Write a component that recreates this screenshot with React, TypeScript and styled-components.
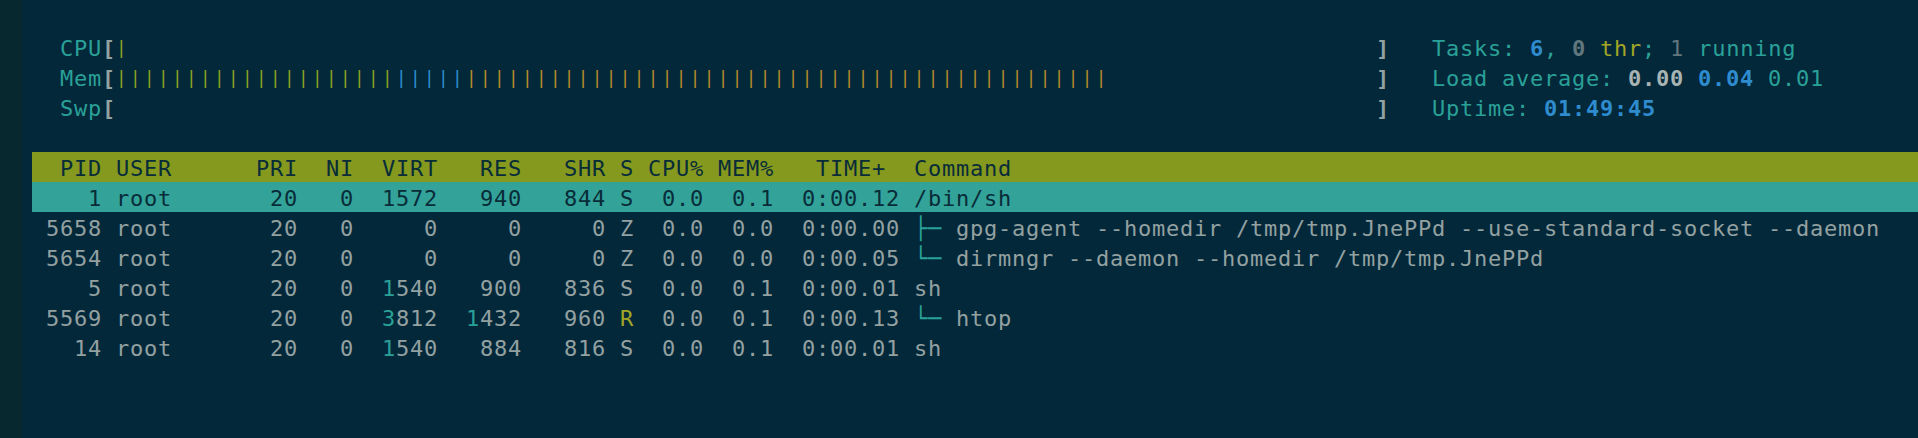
import React from 'react';
import styled, { createGlobalStyle } from 'styled-components';

const CW = 14; // width of one terminal column, px

const C = {
  bg: '#03283a',
  strip: '#08282f',
  text: '#93a1a1',
  cyan: '#2aa198',
  blue: '#2e8ccf',
  green: '#8e9e24',
  yellow: '#b98a2a',
  dim: '#62777d',
  ink: '#082c38',
  header: '#86991f',
  select: '#33a39a',
  thr: '#a2a626',
  light: '#a8b3b3',
};

const GlobalStyle = createGlobalStyle`
  html, body { margin: 0; padding: 0; background: ${C.bg}; }
  body { width: 1918px; height: 438px; overflow: hidden; }
`;

const Screen = styled.div`
  display: flex;
  width: 1918px;
  height: 438px;
  background: ${C.bg};
  font-family: "DejaVu Sans Mono", "Liberation Mono", monospace;
  font-size: 22px;
  letter-spacing: 0.755px;
  color: ${C.text};
`;

const Strip = styled.div`
  flex: none;
  width: 22px;
  background: ${C.strip};
`;

const Terminal = styled.div`
  flex: 1;
  min-width: 0;
  display: flex;
  flex-direction: column;
  padding: 32px 0 0 10px;
`;

const Line = styled.div<{ $bg?: string; $fg?: string }>`
  display: flex;
  flex: none;
  height: 30px;
  line-height: 33px;
  white-space: pre;
  background: ${(p) => p.$bg ?? 'transparent'};
  color: ${(p) => p.$fg ?? 'inherit'};
`;

/* ---------- meters ---------- */

const LeftMeter = styled.div`
  display: flex;
  flex: none;
  width: ${97 * CW}px;
`;

const MeterLabel = styled.span`
  flex: none;
  width: ${5 * CW}px;
  text-align: right;
  color: ${C.cyan};
`;

const Bracket = styled.span`
  flex: none;
  width: ${CW}px;
  color: ${C.text};
  font-weight: bold;
`;

const BarArea = styled.span`
  flex: none;
  display: block;
  width: ${90 * CW}px;
`;

/* the bar glyph is drawn smaller than the text, on a 14px cell */
const Bar = styled.span<{ $c: string }>`
  color: ${(p) => p.$c};
  font-size: 17.6px;
  letter-spacing: ${CW - 17.6 * 0.6021}px;
  vertical-align: 3.5px;
`;

const RightMeter = styled.div`
  flex: none;
  padding-left: ${3 * CW}px;
`;

const T = styled.span<{ $c?: string; $b?: boolean }>`
  color: ${(p) => p.$c ?? C.cyan};
  font-weight: ${(p) => (p.$b ? 'bold' : 'normal')};
`;

type Seg = { n: number; c: string };

const Meter: React.FC<{ label: string; segs: Seg[]; children?: React.ReactNode }> = ({
  label,
  segs,
  children,
}) => (
  <Line>
    <LeftMeter>
      <MeterLabel>{label}</MeterLabel>
      <Bracket>[</Bracket>
      <BarArea>
        {segs.map((s, i) => (
          <Bar key={i} $c={s.c}>
            {'|'.repeat(s.n)}
          </Bar>
        ))}
      </BarArea>
      <Bracket>]</Bracket>
    </LeftMeter>
    <RightMeter>{children}</RightMeter>
  </Line>
);

/* ---------- process table ---------- */

const Cell = styled.span<{ $w: number; $right?: boolean; $pad?: boolean }>`
  flex: none;
  width: ${(p) => p.$w * CW}px;
  text-align: ${(p) => (p.$right ? 'right' : 'left')};
  padding-left: ${(p) => (p.$pad ? CW : 0)}px;
  box-sizing: border-box;
`;

const CmdCell = styled.span`
  flex: 1;
  padding-left: ${CW}px;
`;

const Hi = styled.span<{ $c: string; $on: boolean }>`
  color: ${(p) => (p.$on ? p.$c : 'inherit')};
`;

type Proc = {
  pid: number;
  virt: string;
  res: string;
  shr: string;
  s: string;
  cpu: string;
  mem: string;
  time: string;
  tree?: string;
  cmd: string;
  selected?: boolean;
};

const procs: Proc[] = [
  { pid: 1, virt: '1572', res: '940', shr: '844', s: 'S', cpu: '0.0', mem: '0.1', time: '0:00.12', cmd: '/bin/sh', selected: true },
  { pid: 5658, virt: '0', res: '0', shr: '0', s: 'Z', cpu: '0.0', mem: '0.0', time: '0:00.00', tree: '├─ ', cmd: 'gpg-agent --homedir /tmp/tmp.JnePPd --use-standard-socket --daemon' },
  { pid: 5654, virt: '0', res: '0', shr: '0', s: 'Z', cpu: '0.0', mem: '0.0', time: '0:00.05', tree: '└─ ', cmd: 'dirmngr --daemon --homedir /tmp/tmp.JnePPd' },
  { pid: 5, virt: '1540', res: '900', shr: '836', s: 'S', cpu: '0.0', mem: '0.1', time: '0:00.01', cmd: 'sh' },
  { pid: 5569, virt: '3812', res: '1432', shr: '960', s: 'R', cpu: '0.0', mem: '0.1', time: '0:00.13', tree: '└─ ', cmd: 'htop' },
  { pid: 14, virt: '1540', res: '884', shr: '816', s: 'S', cpu: '0.0', mem: '0.1', time: '0:00.01', cmd: 'sh' },
];

const Mem: React.FC<{ v: string; on: boolean }> = ({ v, on }) =>
  v.length > 3 ? (
    <>
      <Hi $c={C.cyan} $on={on}>
        {v.slice(0, v.length - 3)}
      </Hi>
      {v.slice(v.length - 3)}
    </>
  ) : (
    <>{v}</>
  );

const ProcRow: React.FC<{ p: Proc }> = ({ p }) => {
  const on = !p.selected;
  return (
    <Line $bg={p.selected ? C.select : undefined} $fg={p.selected ? C.ink : undefined}>
      <Cell $w={5} $right>{p.pid}</Cell>
      <Cell $w={10} $pad>root</Cell>
      <Cell $w={4} $right>20</Cell>
      <Cell $w={4} $right>0</Cell>
      <Cell $w={6} $right><Mem v={p.virt} on={on} /></Cell>
      <Cell $w={6} $right><Mem v={p.res} on={on} /></Cell>
      <Cell $w={6} $right><Mem v={p.shr} on={on} /></Cell>
      <Cell $w={2} $right>
        <Hi $c={C.thr} $on={on && p.s === 'R'}>{p.s}</Hi>
      </Cell>
      <Cell $w={5} $right>{p.cpu}</Cell>
      <Cell $w={5} $right>{p.mem}</Cell>
      <Cell $w={9} $right>{p.time}</Cell>
      <CmdCell>
        {p.tree && <Hi $c={C.cyan} $on={on}>{p.tree}</Hi>}
        {p.cmd}
      </CmdCell>
    </Line>
  );
};

const HeaderRow: React.FC = () => (
  <Line $bg={C.header} $fg={C.ink}>
    <Cell $w={5} $right>PID</Cell>
    <Cell $w={10} $pad>USER</Cell>
    <Cell $w={4} $right>PRI</Cell>
    <Cell $w={4} $right>NI</Cell>
    <Cell $w={6} $right>VIRT</Cell>
    <Cell $w={6} $right>RES</Cell>
    <Cell $w={6} $right>SHR</Cell>
    <Cell $w={2} $right>S</Cell>
    <Cell $w={5} $right>CPU%</Cell>
    <Cell $w={5} $right>MEM%</Cell>
    <Cell $w={9} $right>{'TIME+ '}</Cell>
    <CmdCell>Command</CmdCell>
  </Line>
);

export default function App() {
  return (
    <>
      <GlobalStyle />
      <Screen>
        <Strip />
        <Terminal>
          <Meter label="CPU" segs={[{ n: 1, c: C.green }]}>
            <T>Tasks: </T>
            <T $c={C.blue} $b>6</T>
            <T>, </T>
            <T $c={C.dim} $b>0</T>
            <T> </T>
            <T $c={C.thr}>thr</T>
            <T>; </T>
            <T $c={C.dim}>1</T>
            <T> running</T>
          </Meter>
          <Meter
            label="Mem"
            segs={[
              { n: 20, c: C.green },
              { n: 5, c: C.blue },
              { n: 46, c: C.yellow },
            ]}
          >
            <T>Load average: </T>
            <T $c={C.light} $b>0.00 </T>
            <T $c={C.blue} $b>0.04 </T>
            <T>0.01</T>
          </Meter>
          <Meter label="Swp" segs={[]}>
            <T>Uptime: </T>
            <T $c={C.blue} $b>01:49:45</T>
          </Meter>
          <Line />
          <HeaderRow />
          {procs.map((p) => (
            <ProcRow key={p.pid} p={p} />
          ))}
        </Terminal>
      </Screen>
    </>
  );
}
